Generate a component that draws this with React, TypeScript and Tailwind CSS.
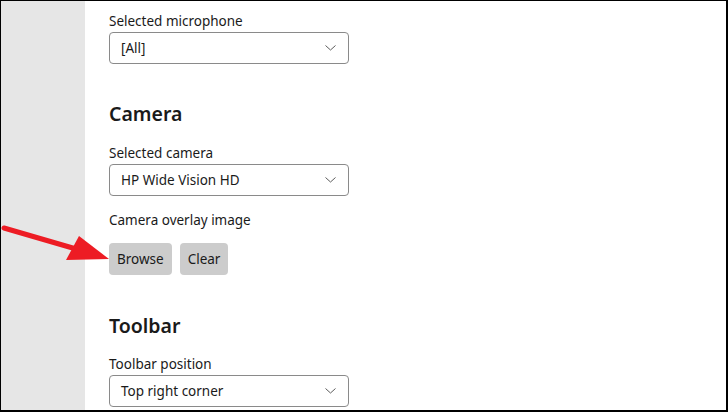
import React from 'react';

const font = { fontFamily: '"Noto Sans", "Open Sans", sans-serif' };

const Chevron: React.FC = () => (
  <svg width="11" height="6" viewBox="0 0 11 6" className="shrink-0">
    <path d="M0.5 0.5 L5.5 5 L10.5 0.5" fill="none" stroke="#5c5c5c" strokeWidth="1" />
  </svg>
);

const Dropdown: React.FC<{ value: string }> = ({ value }) => (
  <div className="w-[240px] h-[32px] border border-[#8a8a8a] rounded-[4px] bg-white flex items-center justify-between pl-[11px] pr-[12px]">
    <span className="text-[13.5px] text-[#1a1a1a]">{value}</span>
    <Chevron />
  </div>
);

const Label: React.FC<{ children: React.ReactNode }> = ({ children }) => (
  <div className="text-[13.5px] leading-[22px] text-[#1a1a1a]">{children}</div>
);

const Heading: React.FC<{ children: React.ReactNode }> = ({ children }) => (
  <h2 className="text-[19.5px] leading-[28px] font-semibold text-[#1a1a1a]">{children}</h2>
);

export default function App() {
  return (
    <div
      className="relative w-[728px] h-[412px] overflow-hidden bg-white border-l border-t border-r-2 border-b-2 border-black flex"
      style={font}
    >
      <div className="w-[84px] shrink-0 bg-[#e6e6e6]" />

      <div className="flex-1 pl-[24px] pt-[9px] flex flex-col">
        <Label>Selected microphone</Label>
        <Dropdown value="[All]" />

        <div className="mt-[36px]">
          <Heading>Camera</Heading>
        </div>
        <div className="mt-[14px]">
          <Label>Selected camera</Label>
        </div>
        <Dropdown value="HP Wide Vision HD" />
        <div className="mt-[13px]">
          <Label>Camera overlay image</Label>
        </div>
        <div className="mt-[12px] flex gap-[8px]">
          <button className="h-[32px] px-[8px] rounded-[4px] bg-[#cccccc] text-[13.5px] text-[#1a1a1a]">Browse</button>
          <button className="h-[32px] px-[8px] rounded-[4px] bg-[#cccccc] text-[13.5px] text-[#1a1a1a]">Clear</button>
        </div>

        <div className="mt-[37px]">
          <Heading>Toolbar</Heading>
        </div>
        <div className="mt-[13px]">
          <Label>Toolbar position</Label>
        </div>
        <Dropdown value="Top right corner" />
      </div>

      {/* annotation arrow */}
      <svg className="absolute left-0 top-0 pointer-events-none" width="120" height="270" viewBox="0 0 120 270">
        <line x1="3" y1="227" x2="82" y2="250" stroke="#ed1c24" strokeWidth="5" strokeLinecap="round" />
        <polygon points="108,258 78,235 65,259" fill="#ed1c24" />
      </svg>
    </div>
  );
}
